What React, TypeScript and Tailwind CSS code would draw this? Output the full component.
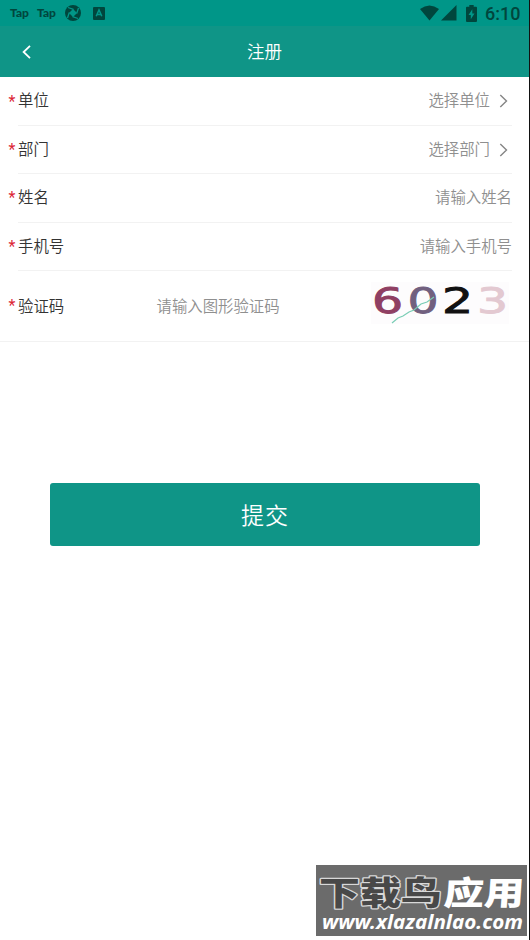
import type { ReactNode } from 'react'

interface FieldRowProps {
  label: string
  children: ReactNode
}

const captcha = [
  { char: '6', x: 1, color: '#8f3f63' },
  { char: '0', x: 36.5, color: '#71607f' },
  { char: '2', x: 71, color: '#111111' },
  { char: '3', x: 106, color: '#e3c9d1' },
]

function StatusBar() {
  return (
    <div className="flex h-[26px] items-center bg-[#009688] pr-[8px] pl-[10px] text-[#00463d]">
      <span className="w-[27px] font-['Lato'] text-[12px] leading-none font-black">Tap</span>
      <span className="w-[28px] font-['Lato'] text-[12px] leading-none font-black">Tap</span>
      <svg width="16" height="16" viewBox="0 0 16 16" fill="currentColor">
        <circle cx="8" cy="8" r="8" />
        <path d="M8 4 12 8 8 12 4 8Z" fill="#009688" />
        <path d="M8.500 4.300 3 2.500M11.700 8.500 13.500 3M7.500 11.700 13 13.500M4.300 7.500 2.500 13" stroke="#009688" strokeWidth="1.3" />
      </svg>
      <svg className="ml-[12px]" width="12" height="13" viewBox="0 0 12 13">
        <rect width="12" height="13" rx="1" fill="currentColor" />
        <path d="M3.2 9.3 6 2.9l2.8 6.4M4.2 7.4h3.6" fill="none" stroke="#009688" strokeWidth="1.5" />
      </svg>
      <div className="ml-auto flex items-center">
        <svg width="19" height="16" viewBox="0 0 19 16" fill="currentColor">
          <path d="M0 4Q9.5-3.2 19 4L9.5 15.5Z" />
        </svg>
        <svg className="ml-[2px]" width="16" height="16" viewBox="0 0 16 16" fill="currentColor">
          <path d="M15.5 0v15.5H0Z" />
        </svg>
        <svg className="ml-[9px]" width="11" height="17" viewBox="0 0 11 17">
          <path d="M3.3 0h4.4v1.7H10a1 1 0 0 1 1 1V16a1 1 0 0 1-1 1H1a1 1 0 0 1-1-1V2.7a1 1 0 0 1 1-1h2.3Z" fill="currentColor" />
          <path d="M6.3 4.3 2.5 10h2.3v4.2L8.5 8.4H6.3Z" fill="#009688" />
        </svg>
        <span className="ml-[8px] w-[36px] pt-[2px] font-['Roboto'] text-[18px] leading-none font-medium">6:10</span>
      </div>
    </div>
  )
}

function Header() {
  return (
    <header className="grid h-[50.5px] grid-cols-[1fr_auto_1fr] items-center bg-[#0f9587] text-white">
      <svg className="mt-[2px] ml-[22px]" width="10" height="14" viewBox="0 0 10 14" fill="none" stroke="currentColor" strokeWidth="1.8">
        <path d="M8 .8 1.6 7 8 13.2" />
      </svg>
      <h1 className="pb-px text-[17.5px] leading-none font-[350]">注册</h1>
    </header>
  )
}

function Chevron() {
  return (
    <svg className="mt-[2px] mr-[4px] ml-[9px]" width="9" height="14" viewBox="0 0 9 14" fill="none" stroke="#858585" strokeWidth="1.4">
      <path d="M1.3 1 7.5 7 1.3 13" />
    </svg>
  )
}

function Required() {
  return <span className="w-[10px] pl-[0.5px] font-['Roboto'] text-[16px] leading-none font-normal text-[#dc2638]">*</span>
}

function FieldRow({ label, children }: FieldRowProps) {
  return (
    <div className="ml-[8px] flex h-[48.4px] items-center">
      <Required />
      <div className="flex h-full flex-1 items-center justify-between border-b border-[#f2f2f2] pb-[2px] text-[#333]">
        <span>{label}</span>
        <span className="flex items-center text-[#8f8f8f]">{children}</span>
      </div>
    </div>
  )
}

function Captcha() {
  return (
    <svg className="mr-[3px] mb-[5px] overflow-visible bg-[#fdfcfd]" width="138" height="42" viewBox="0 0 138 42">
      {captcha.map((c) => (
        <text key={c.char} transform={`translate(${c.x} 31) scale(1.4 1)`} fill={c.color} stroke={c.color} strokeWidth="0.9" fontFamily="DejaVu Sans" fontSize="35" fontWeight="400">
          {c.char}
        </text>
      ))}
      <path d="M21 41 27 36 32 34 38 30 43 28 50 22 56 20 63 15" fill="none" stroke="#79cdb5" strokeWidth="1.2" />
    </svg>
  )
}

function Watermark() {
  return (
    <div className="mt-auto mr-[2px] mb-[4px] h-[71px] w-[211px] self-end bg-[#6b6b6b]">
      <svg width="211" height="71" viewBox="0 0 211 71">
        <g fontFamily="Noto Sans CJK SC, sans-serif" fontSize="33" fontWeight="900" paintOrder="stroke" strokeLinejoin="round">
          <text transform="translate(3 40) scale(1.24 1)" fill="#484848" stroke="#d8d8d8" strokeWidth="2.4">
            下载鸟
          </text>
          <text transform="translate(127 40) skewX(-4) scale(1.22 1)" fill="#fff">
            应用
          </text>
        </g>
        <text x="6" y="64" textLength="201" lengthAdjust="spacingAndGlyphs" fontFamily="Noto Sans, sans-serif" fontSize="20" fontStyle="italic" fontWeight="700" fill="#fff">
          www.xlazalnlao.com
        </text>
      </svg>
    </div>
  )
}

export default function App() {
  return (
    <div className="flex h-[940px] w-[530px] flex-col border-r border-[#111] bg-white font-['Noto_Sans_CJK_SC',sans-serif] text-[15.4px] leading-none font-[350]">
      <StatusBar />
      <Header />
      <div className="pt-px pr-[17px]">
        <FieldRow label="单位">
          选择单位
          <Chevron />
        </FieldRow>
        <FieldRow label="部门">
          选择部门
          <Chevron />
        </FieldRow>
        <FieldRow label="姓名">请输入姓名</FieldRow>
        <FieldRow label="手机号">请输入手机号</FieldRow>
      </div>
      <div className="flex h-[71px] items-center border-b border-[#f2f2f2] pr-[17px] pb-px pl-[8px]">
        <Required />
        <span className="w-[138.5px] text-[#333]">验证码</span>
        <span className="flex-1 text-[#8f8f8f]">请输入图形验证码</span>
        <Captcha />
      </div>
      <button className="mt-[140.5px] mr-[49px] ml-[50px] h-[63.5px] rounded-[3px] bg-[#0f9587] text-[23px] leading-none font-[350] tracking-[1px] text-white">
        提交
      </button>
      <Watermark />
    </div>
  )
}
